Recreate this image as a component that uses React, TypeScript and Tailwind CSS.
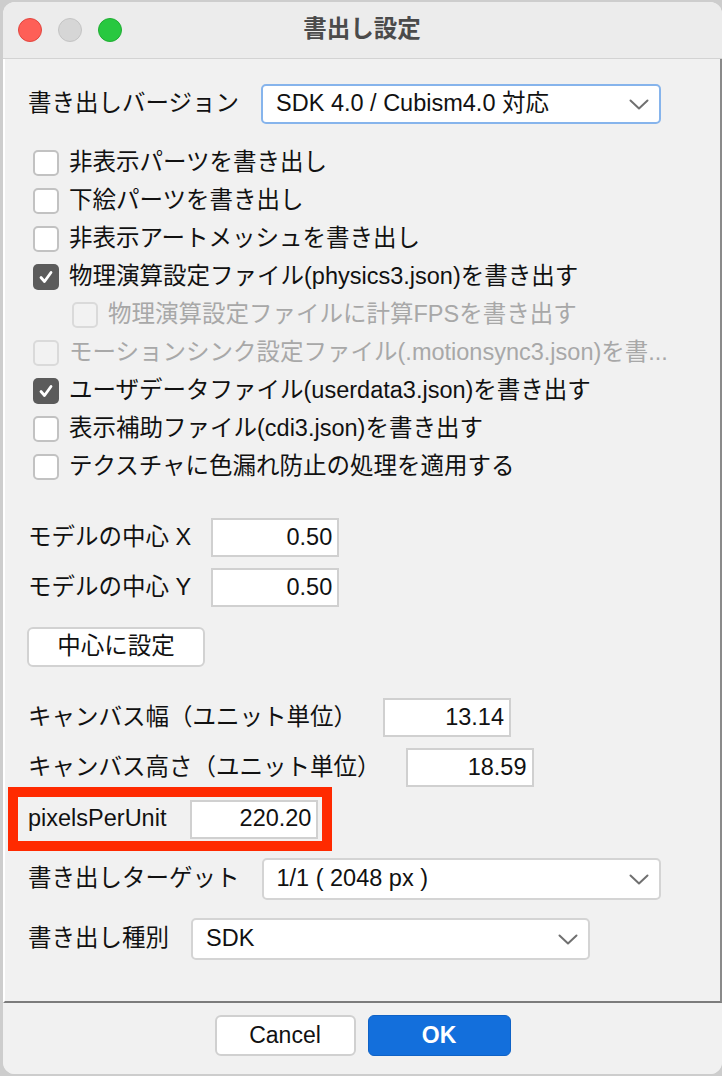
import React from "react";

const FONT = { fontFamily: '"Liberation Sans", "Noto Sans CJK JP", sans-serif' };

function Chevron() {
  return (
    <svg width="20" height="11" viewBox="0 0 20 11" className="shrink-0">
      <path d="M1.5 1.5 L10 9.5 L18.5 1.5" fill="none" stroke="#707070" strokeWidth="2" strokeLinecap="round" strokeLinejoin="round" />
    </svg>
  );
}

function Select({ value, w }: { value: string; w: string }) {
  return (
    <div className={`${w} h-[42px] flex items-center justify-between pl-[13px] pr-[10px] bg-white rounded-[5px] border-2 border-[#d4d4d4]`}>
      <span className="text-[23.5px] text-[#111] leading-none whitespace-nowrap">{value}</span>
      <Chevron />
    </div>
  );
}

function Check({ checked, disabled, label, indent }: { checked?: boolean; disabled?: boolean; label: string; indent?: boolean }) {
  return (
    <div className={`h-[38px] flex items-center gap-[10px] ${indent ? "pl-[44px]" : "pl-[5px]"}`}>
      {checked ? (
        <div className="w-[26px] h-[26px] rounded-[5px] bg-[#5b5b5b] flex items-center justify-center shrink-0">
          <svg width="18" height="18" viewBox="0 0 18 18">
            <path d="M4 9.5 L7.5 13.5 L14 4.5" fill="none" stroke="white" strokeWidth="2.8" strokeLinecap="round" strokeLinejoin="round" />
          </svg>
        </div>
      ) : (
        <div
          className={`w-[26px] h-[26px] rounded-[5px] border-2 shrink-0 ${
            disabled ? "border-[#dadada] bg-[#f2f2f2]" : "border-[#c2c2c2] bg-white"
          }`}
        />
      )}
      <span className={`text-[23.5px] leading-none whitespace-nowrap ${disabled ? "text-[#a8a8a8]" : "text-[#111]"}`}>{label}</span>
    </div>
  );
}

function NumField({ value }: { value: string }) {
  return (
    <div className="w-[128px] h-[39px] bg-white border-2 border-[#d0d0d0] flex items-center justify-end pr-[5px] shrink-0">
      <span className="text-[23.5px] leading-none text-[#111]">{value}</span>
    </div>
  );
}

function LabeledField({ label, value, className = "" }: { label: string; value: string; className?: string }) {
  return (
    <div className={`flex items-center ${className}`}>
      <span className="text-[23.5px] leading-none text-[#111] whitespace-nowrap">{label}</span>
      <NumField value={value} />
    </div>
  );
}

export default function App() {
  return (
    <div className="w-[722px] h-[1076px] bg-[#cdcdcd] pt-[2px] pl-[3px] overflow-hidden" style={FONT}>
      <div className="w-[719px] h-[1072px] rounded-[12px] bg-[#f1f1f1] overflow-hidden flex flex-col">
        {/* Title bar */}
        <div className="h-[57px] shrink-0 bg-[#ececec] border-b border-[#d3d3d3] flex items-center">
          <div className="flex items-center gap-[16px] pl-[15px]">
            <div className="w-[24px] h-[24px] rounded-full bg-[#fe5f57] border border-[#e2463f]" />
            <div className="w-[24px] h-[24px] rounded-full bg-[#d6d6d6] border border-[#c4c4c4]" />
            <div className="w-[24px] h-[24px] rounded-full bg-[#28c840] border border-[#1fad32]" />
          </div>
          <div className="flex-1 flex justify-center pr-[100px]">
            <span className="text-[23.5px] font-bold text-[#4b4b4b] leading-none -ml-[20px]">書出し設定</span>
          </div>
        </div>

        {/* Content panel */}
        <div className="h-[944px] shrink-0 bg-[#f1f1f1] border-l-2 border-l-white border-r-2 border-r-[#8a8a8a] border-b-2 border-b-[#7c7c7c] pl-[23px] pt-[25px] flex flex-col">
          <div className="flex items-center gap-[22px] h-[40px]">
            <span className="text-[23.5px] leading-none text-[#111] whitespace-nowrap">書き出しバージョン</span>
            <div className="w-[400px] h-[40px] flex items-center justify-between pl-[13px] pr-[10px] bg-white rounded-[5px] border-2 border-[#86b4ec]">
              <span className="text-[23.5px] text-[#111] leading-none whitespace-nowrap">SDK 4.0 / Cubism4.0 対応</span>
              <Chevron />
            </div>
          </div>

          <div className="mt-[20px] flex flex-col">
            <Check label="非表示パーツを書き出し" />
            <Check label="下絵パーツを書き出し" />
            <Check label="非表示アートメッシュを書き出し" />
            <Check checked label="物理演算設定ファイル(physics3.json)を書き出す" />
            <Check disabled indent label="物理演算設定ファイルに計算FPSを書き出す" />
            <Check disabled label="モーションシンク設定ファイル(.motionsync3.json)を書..." />
            <Check checked label="ユーザデータファイル(userdata3.json)を書き出す" />
            <Check label="表示補助ファイル(cdi3.json)を書き出す" />
            <Check label="テクスチャに色漏れ防止の処理を適用する" />
          </div>

          <LabeledField className="mt-[32px] gap-[20px]" label="モデルの中心 X" value="0.50" />
          <LabeledField className="mt-[11px] gap-[20px]" label="モデルの中心 Y" value="0.50" />

          <div className="mt-[20px] w-[178px] h-[40px] -ml-[1px] bg-white border-2 border-[#d2d2d2] rounded-[6px] flex items-center justify-center">
            <span className="text-[23.5px] leading-none text-[#111]">中心に設定</span>
          </div>

          <LabeledField className="mt-[31px] gap-[26px]" label="キャンバス幅（ユニット単位）" value="13.14" />
          <LabeledField className="mt-[11px] gap-[25px]" label="キャンバス高さ（ユニット単位）" value="18.59" />

          <div className="-ml-[20px] w-[324px] h-[64px] border-[10px] border-[#ff2a00] flex items-center pl-[10px] gap-[24px]">
            <span className="text-[23.5px] leading-none text-[#111] whitespace-nowrap">pixelsPerUnit</span>
            <NumField value="220.20" />
          </div>

          <div className="mt-[7px] flex items-center gap-[22px]">
            <span className="text-[23.5px] leading-none text-[#111] whitespace-nowrap">書き出しターゲット</span>
            <Select w="w-[399px]" value="1/1 ( 2048 px )" />
          </div>

          <div className="mt-[18px] flex items-center gap-[22px]">
            <span className="text-[23.5px] leading-none text-[#111] whitespace-nowrap">書き出し種別</span>
            <Select w="w-[399px]" value="SDK" />
          </div>
        </div>

        {/* Footer */}
        <div className="flex-1 bg-[#f1f1f1] flex justify-center gap-[12px] pt-[12px]">
          <div className="w-[141px] h-[41px] bg-white border-2 border-[#d0d0d0] rounded-[6px] flex items-center justify-center">
            <span className="text-[23px] leading-none text-[#111]">Cancel</span>
          </div>
          <div className="w-[143px] h-[41px] bg-[#136fdc] border border-[#0f62c6] rounded-[6px] flex items-center justify-center">
            <span className="text-[23px] leading-none font-bold text-white">OK</span>
          </div>
        </div>
      </div>
    </div>
  );
}
